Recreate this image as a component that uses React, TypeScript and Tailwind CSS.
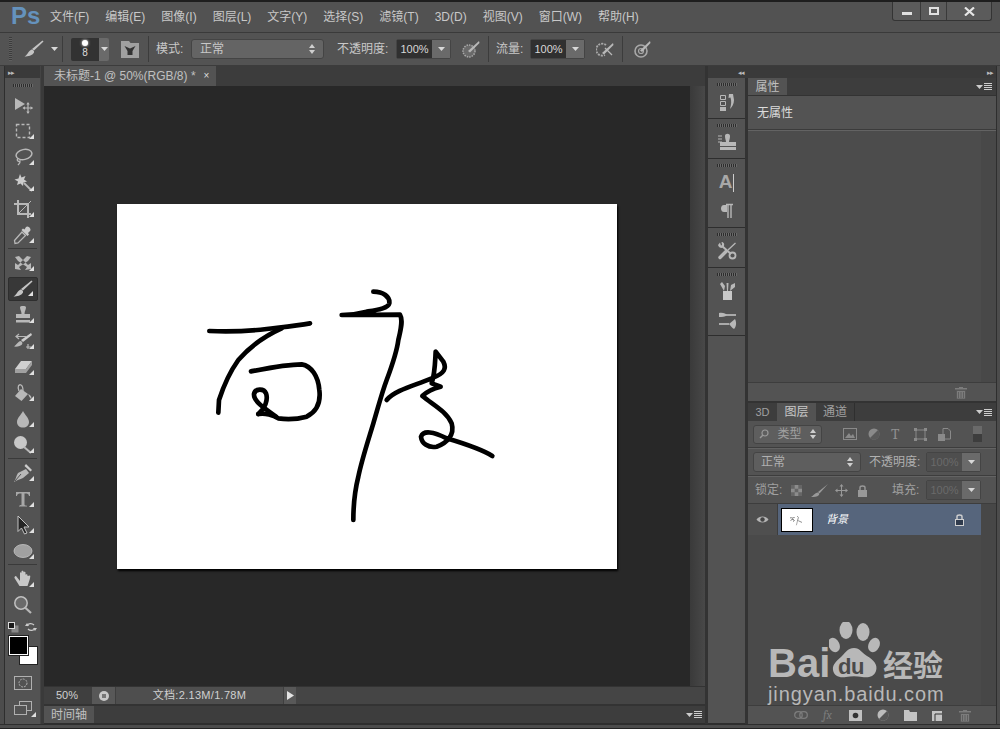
import React from 'react';

const ICON = '#b8b8b8';

// small white triangle in the corner of tools with a flyout
const Flyout = () => (
  <svg width="5" height="5" viewBox="0 0 5 5" className="absolute right-[4px] bottom-[4px]">
    <path d="M5 0V5H0Z" fill="#e0e0e0" />
  </svg>
);

const Caret = ({ color = '#d8d8d8' }: { color?: string }) => (
  <svg width="7" height="4" viewBox="0 0 7 4"><path d="M0 0H7L3.5 4Z" fill={color} /></svg>
);

const UpDown = () => (
  <svg width="6" height="10" viewBox="0 0 6 10"><path d="M3 0L6 4H0ZM0 6H6L3 10Z" fill="#cfcfcf" /></svg>
);

const Grip = ({ w = 20 }: { w?: number }) => (
  <div className="h-[3px] mx-auto" style={{ width: w, backgroundImage: 'repeating-linear-gradient(90deg,#2c2c2c 0 1px,#6a6a6a 1px 2px)' }} />
);

const Svg = ({ children, s = 20 }: { children: React.ReactNode; s?: number }) => (
  <svg width={s} height={s} viewBox="0 0 20 20">{children}</svg>
);

const BrushIcon = () => (
  <Svg>
    <path d="M18.5 1.5L19.5 2.5L10 11.5L8 10Z" fill="#c4c4c4" />
    <path d="M7.5 10.5C9 10.5 10.5 12 10 13.5C8.5 16.5 4 17.5 0.5 17.5C3 16.5 4.5 12 7.5 10.5Z" fill="#c4c4c4" />
  </Svg>
);

const tools1: React.ReactNode[] = [
  <Svg key="move">
    <path d="M2 3L12 9L2 15Z" fill={ICON} />
    <path d="M15 8V18M10.5 13H19.5" stroke={ICON} strokeWidth="1.2" />
    <path d="M15 7L16.7 9.5H13.3ZM15 19L16.7 16.5H13.3ZM9.5 13L12 11.3V14.7ZM20 13L17.5 11.3V14.7Z" fill={ICON} />
  </Svg>,
  <Svg key="marquee">
    <rect x="3.5" y="3.5" width="13" height="13" fill="none" stroke={ICON} strokeWidth="1.4" strokeDasharray="3 2" />
  </Svg>,
  <Svg key="lasso">
    <ellipse cx="11" cy="7.5" rx="8" ry="5" fill="none" stroke={ICON} strokeWidth="1.5" transform="rotate(-12 11 7.5)" />
    <path d="M5 11C3 14 6 15 7 14C7.5 16 6 17 5 18" fill="none" stroke={ICON} strokeWidth="1.3" />
  </Svg>,
  <Svg key="wand">
    <path d="M7 1L8.5 4.5L12.5 3L11 6.5L14 8.5L10.5 9.5L10 13L7.5 10.5L4 12L5 8.5L1.5 6.5L5.5 5.5Z" fill="#cccccc" />
    <path d="M11 10L19 18" stroke={ICON} strokeWidth="1.8" />
  </Svg>,
  <Svg key="crop">
    <path d="M5 1V15H18M1 5H15V19" fill="none" stroke={ICON} strokeWidth="2" />
    <path d="M5 15L18 2" stroke={ICON} strokeWidth="1" />
  </Svg>,
  <Svg key="dropper">
    <path d="M13 2C15 0 19 4 17 6L15 8L16 9.5L14.5 11L8.5 5L10 3.5L11.5 4.5Z" fill="#cacaca" />
    <path d="M9 7L12.5 10.5L5 18L2 18.5L1.5 15.5Z" fill="none" stroke={ICON} strokeWidth="1.3" />
  </Svg>,
];

const tools2: React.ReactNode[] = [
  <Svg key="heal">
    <path d="M2 4L6 3L15 12L18 10L18 16L12 17L14 14L5 8ZM18 4L14 3L5 12L2 10L2 16L8 17L6 14L15 8Z" fill={ICON} />
  </Svg>,
  <BrushIcon key="brush" />,
  <Svg key="stamp">
    <path d="M7 2C7 0.5 13 0.5 13 2C13 5 11.5 6 11.5 9H17V13H3V9H8.5C8.5 6 7 5 7 2Z" fill={ICON} />
    <rect x="3" y="15" width="14" height="2.5" fill={ICON} />
  </Svg>,
  <Svg key="history">
    <path d="M18 2L8 9L10 11L19 4Z" fill="#cccccc" />
    <path d="M7 10C9 10 10 12 9 13.5C8 15 4 16 1 15.5C3 14.5 4.5 11 7 10Z" fill={ICON} />
    <path d="M6 3L3 5.5L6 8M3 5.5H13M15 13V18M13 16H18" fill="none" stroke={ICON} strokeWidth="1.2" />
  </Svg>,
  <Svg key="eraser">
    <path d="M8 4H19L13 12H2Z" fill="#d0d0d0" />
    <path d="M2 12H13V16H2ZM13 12L19 4V8L13 16Z" fill="#a0a0a0" />
  </Svg>,
  <Svg key="bucket">
    <path d="M8 6L15 11L8.5 18L2 13Z" fill={ICON} />
    <path d="M6 8C4 3 6 1 8 2C10 3 10 6 10 8" fill="none" stroke={ICON} strokeWidth="1.3" />
    <path d="M15 11C18 12 19 14 18 16C17 15 16 13 15 11Z" fill={ICON} />
  </Svg>,
  <Svg key="blur">
    <path d="M10 2C12 6 16 9 16 13C16 16.5 13.5 18.5 10 18.5C6.5 18.5 4 16.5 4 13C4 9 8 6 10 2Z" fill={ICON} />
  </Svg>,
  <Svg key="dodge">
    <circle cx="7.5" cy="7.5" r="6.5" fill="#c8c8c8" />
    <path d="M11 12L18 18" stroke={ICON} strokeWidth="2" />
  </Svg>,
];

const tools3: React.ReactNode[] = [
  <Svg key="pen">
    <path d="M13 6L16 10L10 15C7 16.5 4 17 1 19C3 16 3 13 5 10Z" fill={ICON} />
    <path d="M13 1L19 7L17.5 8.5L11.5 3Z" fill="#cccccc" />
    <path d="M2 18L8 11" stroke="#535353" strokeWidth="1" />
  </Svg>,
  <Svg key="type">
    <path d="M3 3H17V7H16C15.5 5 15 4.500 11.500 4.500V15.500C11.500 16.500 12.500 16.500 14 16.700V17.500H6V16.700C7.500 16.500 8.500 16.500 8.500 15.500V4.500C5 4.500 4.500 5 4 7H3Z" fill="#a8a8a8" />
  </Svg>,
  <Svg key="path">
    <path d="M5 1L16 12H11L14 18L11.5 19L8.500 13L5 16.5Z" fill="#252525" stroke="#c4c4c4" strokeWidth="1" />
  </Svg>,
  <Svg key="shape">
    <ellipse cx="10" cy="10" rx="9" ry="6.5" fill="#a0a0a0" stroke="#c4c4c4" strokeWidth="0.8" />
  </Svg>,
];

const tools4: React.ReactNode[] = [
  <Svg key="hand">
    <path d="M3 7L7 12V4C7 3 8.500 3 8.500 4V10V2.500C8.500 1.500 10.500 1.500 10.500 2.500V10V3.500C10.500 2.500 12.500 2.500 12.500 3.500V10.500V6C12.500 5 14.500 5 14.500 6V7L17 6.500C18 7 16 13 14.500 17H6.500L1.500 9C1 8 2.500 6.500 3 7Z" fill="#c8c8c8" />
  </Svg>,
  <Svg key="zoom">
    <circle cx="8" cy="8" r="6.200" fill="#6a6a6a" stroke="#c0c0c0" strokeWidth="1.500" />
    <path d="M12 12.500L18 18" stroke={ICON} strokeWidth="2.200" />
  </Svg>,
];

const Tool = ({ icon, flyout = true, active = false }: { icon: React.ReactNode; flyout?: boolean; active?: boolean }) => (
  <div className="h-[26px] flex items-center justify-center">
    <div className={`relative w-[30px] h-[24px] flex items-center justify-center rounded-[2px] ${active ? 'bg-[#383838] border border-[#2e2e2e]' : ''}`}>
      {icon}
      {flyout && <Flyout />}
    </div>
  </div>
);

const ToolSep = () => <div className="h-[2px] mx-[3px] border-t border-[#3a3a3a] border-b-[#666]" />;

const ToolBar = () => (
  <div className="w-[44px] flex shrink-0">
    <div className="w-[5px] border-r border-[#2e2e2e] bg-[#4c4c4c]" />
    <div className="w-[36px] flex flex-col bg-[#535353] border-r border-[#444]">
      <div className="h-[12px] bg-[#3a3a3a] flex items-center pl-[3px] text-[#bbb] text-[7px] leading-none tracking-[-1px]">▸▸</div>
      <div className="h-[14px] flex items-center"><Grip /></div>
      {tools1.map((t, i) => <Tool key={i} icon={t} flyout={i !== 0} />)}
      <ToolSep />
      {tools2.map((t, i) => <Tool key={i} icon={t} active={i === 1} />)}
      <ToolSep />
      {tools3.map((t, i) => <Tool key={i} icon={t} />)}
      <ToolSep />
      {tools4.map((t, i) => <Tool key={i} icon={t} flyout={i === 0} />)}
      {/* default + swap colours */}
      <div className="h-[16px] flex items-center justify-between px-[3px] mt-[1px]">
        <svg width="11" height="11" viewBox="0 0 11 11"><rect x="3.500" y="3.500" width="7" height="7" fill="#888" /><rect x="0.500" y="0.500" width="6" height="6" fill="#1a1a1a" stroke="#ddd" /></svg>
        <svg width="12" height="12" viewBox="0 0 12 12"><path d="M2 5C3 2 7 2 9 4M10 7C9 10 5 10 3 8" fill="none" stroke="#ccc" strokeWidth="1.200" /><path d="M0 5H4L2 2ZM12 7H8L10 10Z" fill="#ccc" /></svg>
      </div>
      <div className="relative h-[34px]">
        <div className="absolute left-[14px] top-[11px] w-[19px] h-[19px] bg-white border border-[#222]" />
        <div className="absolute left-[4px] top-[1px] w-[19px] h-[19px] bg-black border border-white outline outline-1 outline-[#222]" />
      </div>
      <div className="h-[24px] flex items-center justify-center mt-[2px]">
        <svg width="18" height="14" viewBox="0 0 18 14"><rect x="0.500" y="0.500" width="17" height="13" fill="none" stroke="#b0b0b0" /><circle cx="9" cy="7" r="4" fill="none" stroke="#b0b0b0" strokeDasharray="2 1" /></svg>
      </div>
      <div className="relative h-[26px] flex items-center justify-center">
        <svg width="18" height="15" viewBox="0 0 18 15"><rect x="5.500" y="0.500" width="12" height="9" fill="none" stroke="#b0b0b0" /><rect x="0.500" y="4.500" width="12" height="9" fill="#535353" stroke="#b0b0b0" /></svg>
        <Flyout />
      </div>
    </div>
    <div className="w-[3px] bg-[#3a3a3a]" />
  </div>
);

const menus = ['文件(F)', '编辑(E)', '图像(I)', '图层(L)', '文字(Y)', '选择(S)', '滤镜(T)', '3D(D)', '视图(V)', '窗口(W)', '帮助(H)'];

const TitleBar = () => (
  <div className="h-[32px] shrink-0 flex items-start relative bg-[#525252] border-t-2 border-[#1e1e1e]">
    <div className="w-[50px] pl-[11px] pt-[1px] text-[24px] leading-[26px] font-bold text-[#6592bd]">Ps</div>
    <div className="flex gap-[16px] pt-[7px] text-[12px] leading-[16px] text-[#c8c8c8]">
      {menus.map(m => <span key={m}>{m}</span>)}
    </div>
    <div className="ml-auto mr-[8px] flex h-[19px] w-[100px] bg-[#5b5b5b] border border-t-0 border-[#343434] rounded-b-[3px]">
      <div className="w-[28px] flex items-center justify-center border-r border-[#3a3a3a]"><div className="w-[10px] h-[3px] mt-[5px] bg-[#e0e0e0]" /></div>
      <div className="w-[26px] flex items-center justify-center border-r border-[#3a3a3a]"><div className="w-[10px] h-[8px] border-2 border-[#e0e0e0]" /></div>
      <div className="flex-1 flex items-center justify-center">
        <svg width="11" height="9" viewBox="0 0 11 9"><path d="M1 0.500L10 8.500M10 0.500L1 8.500" stroke="#e6e6e6" strokeWidth="2.200" /></svg>
      </div>
    </div>
  </div>
);

const ComboInput = ({ dim = false }: { dim?: boolean }) => (
  <div className={`flex w-[55px] h-[20px] rounded-[2px] border border-[#444] ${dim ? 'text-[#6a6a6a]' : 'text-[#d8d8d8]'}`}>
    <div className={`w-[35px] flex items-center justify-center text-[11px] ${dim ? 'bg-[#4e4e4e]' : 'bg-[#303030]'}`}>100%</div>
    <div className="flex-1 flex items-center justify-center bg-[#6a6a6a]"><Caret /></div>
  </div>
);

const OptSep = () => <div className="w-[1px] h-[26px] bg-[#3c3c3c]" />;

const Airbrush = () => (
  <svg width="18" height="18" viewBox="0 0 18 18">
    <circle cx="7" cy="11" r="6" fill="#6a6a6a" stroke="#a8a8a8" strokeWidth="1.500" strokeDasharray="1.500 1" />
    <path d="M17 1L6 11L8 12.500L17.500 3Z" fill="#b8b8b8" />
  </svg>
);

const OptionsBar = () => (
  <div className="h-[34px] shrink-0 flex items-center bg-[#535353] border-t border-[#3a3a3a] border-b border-b-[#3c3c3c] pl-[9px] text-[12px] text-[#c8c8c8]">
    <div className="w-[3px] h-[24px] mr-[12px]" style={{ backgroundImage: 'repeating-linear-gradient(180deg,#3c3c3c 0 1px,#5f5f5f 1px 2px)' }} />
    <BrushIcon />
    <div className="ml-[7px] mr-[4px]"><Caret /></div>
    <OptSep />
    <div className="ml-[8px] w-[38px] h-[23px] flex rounded-[2px] overflow-hidden">
      <div className="w-[28px] bg-[#323232] flex flex-col items-center pt-[2px]">
        <div className="w-[6px] h-[6px] rounded-full bg-white shadow-[0_0_3px_#fff]" />
        <span className="text-[10px] leading-[12px] mt-[1px] text-[#ddd]">8</span>
      </div>
      <div className="flex-1 bg-[#6a6a6a] flex items-center justify-center"><Caret /></div>
    </div>
    <div className="ml-[12px]">
      <svg width="18" height="17" viewBox="0 0 18 17"><path d="M0 0H8L9.500 2H18V17H0Z" fill="#a0a0a0" /><path d="M3.500 5L9 7.500L14.500 5L11.500 10V14H6.500V10Z" fill="#333" /></svg>
    </div>
    <div className="ml-[9px]"><OptSep /></div>
    <span className="ml-[7px] w-[35px]">模式:</span>
    <div className="w-[133px] h-[20px] flex items-center justify-between px-[8px] bg-[#646464] border border-[#444] rounded-[3px]">
      <span>正常</span><UpDown />
    </div>
    <span className="ml-[13px] w-[59px]">不透明度:</span>
    <ComboInput />
    <div className="ml-[11px]"><Airbrush /></div>
    <div className="ml-[8px]"><OptSep /></div>
    <span className="ml-[7px] w-[34px]">流量:</span>
    <ComboInput />
    <div className="ml-[11px]">
      <svg width="18" height="18" viewBox="0 0 18 18">
        <path d="M10 5A6 6 0 1 0 9 15" fill="none" stroke="#a8a8a8" strokeWidth="1.800" strokeDasharray="2 1" />
        <path d="M17 3L6 13L8 14.500L17.500 5Z" fill="#b8b8b8" />
        <path d="M9 8L16 15" stroke="#b8b8b8" strokeWidth="1.200" />
      </svg>
    </div>
    <div className="ml-[8px]"><OptSep /></div>
    <div className="ml-[10px]">
      <svg width="18" height="18" viewBox="0 0 18 18">
        <circle cx="8" cy="11" r="6" fill="none" stroke="#a8a8a8" strokeWidth="1.600" />
        <circle cx="8" cy="11" r="2.500" fill="none" stroke="#a8a8a8" strokeWidth="1.200" />
        <path d="M17 1L7 10.500L9 12L17.500 3Z" fill="#b8b8b8" />
      </svg>
    </div>
  </div>
);

const Drawing = () => (
  <svg viewBox="-219 -228 1500 1095" className="w-full h-full" fill="none" stroke="#000" strokeWidth="14" strokeLinecap="round" strokeLinejoin="round">
    <path d="M58 153C110 155 180 153 230 147C280 141 320 137 360 130" />
    <path d="M275 145C230 165 180 200 145 240C120 275 100 320 87 360L85 398" />
    <path d="M183 274C230 265 290 253 335 253C365 258 385 290 388 330C393 370 380 395 350 410C320 418 285 418 265 415C250 405 225 398 205 402" />
    <path d="M205 402C225 385 235 360 228 340C222 325 195 325 192 342C190 365 225 385 258 410" />
    <path d="M550 35C580 35 600 50 598 70C595 85 560 90 530 95C500 103 480 105 455 105L630 104C640 120 632 150 625 180C620 220 605 260 590 300C575 340 565 380 550 430C535 480 515 540 505 590C495 630 490 660 490 720" />
    <path d="M590 360C610 335 660 320 700 305L725 295C765 280 770 265 760 245L737 215C735 250 735 280 725 310L752 320C730 325 710 335 697 348C730 375 770 395 785 430C795 465 770 490 740 500C715 505 695 490 693 470C700 450 730 455 770 475C820 490 870 505 907 528" />
  </svg>
);

const Document = () => (
  <div className="flex-1 flex flex-col min-w-0">
    {/* tab bar */}
    <div className="h-[20px] shrink-0 bg-[#3c3c3c] flex">
      <div className="w-[172px] bg-[#535353] flex items-center pl-[10px] text-[12px] text-[#c0c0c0] whitespace-nowrap">
        <span>未标题-1 @ 50%(RGB/8) *</span>
        <span className="ml-[8px] text-[10px] leading-none text-[#ddd]">×</span>
      </div>
    </div>
    {/* canvas + scroll strip */}
    <div className="flex-1 flex min-h-0">
      <div className="flex-1 bg-[#282828] flex items-center justify-center">
        <div className="w-[500px] h-[365px] bg-white shadow-[1px_2px_2px_#000]">
          <Drawing />
        </div>
      </div>
      <div className="w-[15px] bg-gradient-to-r from-[#3a3a3a] to-[#484848]" />
    </div>
    {/* status bar */}
    <div className="h-[18px] shrink-0 bg-[#3f3f3f] border-t border-[#333] flex items-center text-[11px] text-[#d0d0d0]">
      <span className="w-[48px] pl-[12px]">50%</span>
      <div className="w-[23px] h-full bg-[#585858] flex items-center justify-center">
        <div className="w-[10px] h-[10px] rounded-full bg-[#c8c8c8] flex items-center justify-center">
          <div className="w-[4px] h-[4px] bg-[#777]" />
        </div>
      </div>
      <div className="w-[168px] h-full bg-[#4e4e4e] text-center leading-[17px] tracking-[0.3px] border-l border-[#3f3f3f]">文档:2.13M/1.78M</div>
      <div className="w-[12px] h-full ml-[1px] bg-[#585858] flex items-center justify-center">
        <svg width="7" height="9" viewBox="0 0 7 9"><path d="M0 0L7 4.500L0 9Z" fill="#e4e4e4" /></svg>
      </div>
      <div className="flex-1 h-full bg-[#454545]" />
    </div>
    {/* timeline */}
    <div className="h-[2px] shrink-0 bg-[#333]" />
    <div className="h-[18px] shrink-0 bg-[#3d3d3d] flex items-stretch border-b border-[#2e2e2e]">
      <div className="w-[50px] bg-[#535353] flex items-center justify-center text-[12px] text-[#c0c0c0]">时间轴</div>
      <div className="ml-auto pr-[3px] flex items-center gap-[1px]"><Caret color="#ccc" /><MenuLines /></div>
    </div>
  </div>
);

const MenuLines = () => (
  <div className="w-[8px] h-[7px]" style={{ backgroundImage: 'repeating-linear-gradient(180deg,#ccc 0 1px,transparent 1px 2px)' }} />
);

const DockGroup = ({ h, children }: { h: number; children: React.ReactNode }) => (
  <div className="shrink-0 bg-[#535353] border-b border-[#2e2e2e] flex flex-col items-center pt-[5px]" style={{ height: h }}>
    <Grip />
    <div className="flex-1 flex flex-col items-center justify-around w-full pb-[1px]">{children}</div>
  </div>
);

const Dock = () => (
  <div className="w-[37px] shrink-0 flex flex-col bg-[#535353]">
    <DockGroup h={41}>
      <Svg>
        <path d="M3.500 3.500H8.500V7.500H3.500ZM3.500 9.500H8.500V13.500H3.500Z" fill="none" stroke={ICON} />
        <rect x="3" y="15" width="6" height="4" fill={ICON} />
        <path d="M12 2H16L17 8C17 12 15 15 13 17C14.500 12 14.500 9 13.500 5.500L11.500 6Z" fill={ICON} />
      </Svg>
    </DockGroup>
    <DockGroup h={40}>
      <Svg>
        <path d="M1 4H5M1 7H5M1 10H5" stroke={ICON} strokeWidth="1.200" />
        <path d="M8 4C8 1 13 1 13 4C13 7 12 8 12 10H19V14H3V10H9C9 8 8 7 8 4Z" fill={ICON} />
        <rect x="3" y="15" width="16" height="3" fill={ICON} />
      </Svg>
    </DockGroup>
    <DockGroup h={69}>
      <div className="flex items-end h-[20px] text-[19px] leading-[20px] font-bold text-[#a8a8a8]">A<div className="w-[1px] h-[18px] bg-[#ccc] ml-[1px]" /></div>
      <Svg>
        <path d="M10 4H7C3 4 3 11 7 11H10Z" fill={ICON} />
        <path d="M11 4V17M14 3V17M9 3.500H16" stroke={ICON} strokeWidth="1.400" />
      </Svg>
    </DockGroup>
    <DockGroup h={40}>
      <Svg>
        {/* wrench */}
        <path d="M5 5L14 13" stroke={ICON} strokeWidth="2" />
        <path d="M1 4L3 1.500L4 4.500L5 4L4.500 1C7 1 8 3.500 6.500 6L4.500 7C3 7 1.500 6 1 4Z" fill={ICON} />
        <circle cx="15.500" cy="14.500" r="3" fill="none" stroke={ICON} strokeWidth="1.800" />
        {/* screwdriver */}
        <path d="M18.500 2L11 9" stroke={ICON} strokeWidth="1.300" />
        <path d="M9 10.500L3 16.500" stroke={ICON} strokeWidth="3.400" strokeLinecap="round" />
      </Svg>
    </DockGroup>
    <DockGroup h={68}>
      <Svg>
        <rect x="6" y="10" width="9" height="9" fill="#c8c8c8" />
        <path d="M7 10L3 3L5 1L8 5ZM10 10L9.500 2L11.500 2L11 10ZM13 10L14 4L18 2L18 6Z" fill={ICON} />
      </Svg>
      <Svg>
        <path d="M2 5H19M2 14H12" stroke="#c8c8c8" strokeWidth="1.400" />
        <path d="M2 3C6 2 9 4 10 5C8 7 5 7 2 7Z" fill={ICON} />
        <path d="M18 9C20 13 19 17 17 19C15 18 13 15 12 14Z" fill={ICON} />
      </Svg>
    </DockGroup>
    <div className="flex-1 border-b border-[#2e2e2e]" />
  </div>
);

const PanelMenu = () => (
  <div className="ml-auto pr-[4px] flex items-center gap-[1px]"><Caret color="#ccc" /><MenuLines /></div>
);

const PanelRule = () => <div className="h-[2px] shrink-0 bg-[#3b3b3b] border-b border-[#636363]" />;

const Trash = ({ color = '#7c7c7c' }: { color?: string }) => (
  <svg width="12" height="13" viewBox="0 0 12 13">
    <path d="M4 1H8V2H12V3.500H0V2H4Z" fill={color} />
    <path d="M1.500 4.500H10.500V13H1.500ZM3.500 6V12M6 6V12M8.500 6V12" fill={color} stroke="#535353" strokeWidth="0.700" />
  </svg>
);

const PropertiesPanel = () => (
  <div className="h-[325px] shrink-0 flex flex-col border-b-2 border-[#333]">
    <div className="h-[18px] shrink-0 bg-[#3d3d3d] flex border-b border-[#333]">
      <div className="w-[39px] bg-[#535353] flex items-center justify-center text-[12px] text-[#c0c0c0]">属性</div>
      <PanelMenu />
    </div>
    <div className="h-[33px] shrink-0 bg-[#535353] flex items-center pl-[9px] text-[12px] text-[#dcdcdc]">无属性</div>
    <PanelRule />
    <div className="flex-1 flex bg-[#4c4c4c]">
      <div className="flex-1" />
      <div className="w-[15px] bg-[#484848]" />
    </div>
    <div className="h-[19px] shrink-0 bg-[#535353] border-t border-[#3d3d3d] flex items-center justify-end pr-[29px]"><Trash /></div>
  </div>
);

const LayersPanel = () => (
  <div className="flex-1 flex flex-col min-h-0 text-[12px]">
    <div className="h-[18px] shrink-0 bg-[#3d3d3d] flex items-stretch text-[#a0a0a0]">
      <div className="w-[29px] flex items-center justify-center text-[11px]">3D</div>
      <div className="w-[39px] bg-[#535353] flex items-center justify-center text-[#c8c8c8]">图层</div>
      <div className="w-[39px] flex items-center justify-center border-r border-[#2f2f2f]">通道</div>
      <PanelMenu />
    </div>
    {/* filter row */}
    <div className="h-[27px] shrink-0 bg-[#535353] flex items-center pl-[5px] border-b border-[#3d3d3d]">
      <div className="w-[69px] h-[19px] flex items-center justify-between px-[5px] bg-[#5e5e5e] border border-[#444] rounded-[3px] text-[#a0a0a0]">
        <svg width="10" height="10" viewBox="0 0 10 10"><circle cx="6" cy="4" r="3" fill="none" stroke="#999" strokeWidth="1.200" /><path d="M4 6L1 9" stroke="#999" strokeWidth="1.400" /></svg>
        <span>类型</span>
        <UpDown />
      </div>
      <div className="ml-[21px] flex items-center gap-[11px] text-[#888]">
        <svg width="14" height="12" viewBox="0 0 14 12"><rect x="0.500" y="0.500" width="13" height="11" fill="none" stroke="#8a8a8a" /><path d="M2 10L6 5L8 8L10 6L12 10Z" fill="#8a8a8a" /></svg>
        <svg width="12" height="12" viewBox="0 0 12 12"><circle cx="6" cy="6" r="5.500" fill="#8a8a8a" /><path d="M10 2L2 10A5.500 5.500 0 0 0 10 2Z" fill="#5a5a5a" /></svg>
        <span className="w-[12px] text-[15px] leading-none font-serif text-[#8f8f8f]">T</span>
        <svg width="13" height="13" viewBox="0 0 13 13"><rect x="2" y="2" width="9" height="9" fill="none" stroke="#8a8a8a" /><path d="M0 0H3V3H0ZM10 0H13V3H10ZM0 10H3V13H0ZM10 10H13V13H10Z" fill="#8a8a8a" /></svg>
        <svg width="13" height="13" viewBox="0 0 13 13"><path d="M5 0.500H10L12.500 3V11H5Z" fill="none" stroke="#8a8a8a" /><rect x="0" y="6" width="7" height="7" fill="#8a8a8a" /></svg>
      </div>
      <div className="ml-[22px] w-[9px] h-[16px] flex flex-col">
        <div className="h-[8px] bg-[#6a6a6a]" />
        <div className="h-[8px] bg-[#3d3d3d]" />
      </div>
    </div>
    {/* blend row */}
    <div className="h-[28px] shrink-0 bg-[#535353] flex items-center pl-[5px] border-t border-[#636363] border-b border-b-[#3d3d3d] text-[#b0b0b0]">
      <div className="w-[108px] h-[20px] flex items-center justify-between px-[7px] bg-[#5e5e5e] border border-[#444] rounded-[3px]">
        <span>正常</span><UpDown />
      </div>
      <span className="ml-[8px] w-[57px] whitespace-nowrap">不透明度:</span>
      <ComboInput dim />
    </div>
    {/* lock row */}
    <div className="h-[28px] shrink-0 bg-[#535353] flex items-center pl-[7px] border-t border-[#636363] border-b border-b-[#3d3d3d] text-[#a0a0a0]">
      <span className="w-[36px]">锁定:</span>
      <svg width="11" height="11" viewBox="0 0 11 11"><rect width="11" height="11" fill="#8c8c8c" /><path d="M0 0H3.700V3.700H0ZM7.300 0H11V3.700H7.300ZM3.700 3.700H7.300V7.300H3.700ZM0 7.300H3.700V11H0ZM7.300 7.300H11V11H7.300Z" fill="#666" /></svg>
      <div className="ml-[9px]">
        <svg width="17" height="13" viewBox="0 0 17 13"><path d="M17 0L7 8L8.500 9.500Z" fill="#999" /><path d="M6.500 8.500C8 8.500 8.500 10 8 11C6 13 3 13 0 13C2 12 4 9 6.500 8.500Z" fill="#999" /></svg>
      </div>
      <div className="ml-[7px]">
        <svg width="13" height="13" viewBox="0 0 13 13"><path d="M6.500 1V12M1 6.500H12" stroke="#999" /><path d="M6.500 0L8.500 2.500H4.500ZM6.500 13L8.500 10.500H4.500ZM0 6.500L2.500 4.500V8.500ZM13 6.500L10.500 4.500V8.500Z" fill="#999" /></svg>
      </div>
      <div className="ml-[9px]">
        <svg width="11" height="13" viewBox="0 0 11 13"><path d="M3 6V3.500C3 1.500 8 1.500 8 3.500V6" fill="none" stroke="#999" strokeWidth="1.400" /><rect x="1" y="6" width="9" height="7" fill="#999" /></svg>
      </div>
      <span className="ml-[24px] w-[34px] whitespace-nowrap">填充:</span>
      <ComboInput dim />
    </div>
    {/* layer rows */}
    <div className="flex-1 flex min-h-0 bg-[#4a4a4a]">
      <div className="flex-1 flex flex-col">
        <div className="h-[31px] flex">
          <div className="w-[30px] bg-[#4f4f4f] border-r border-[#3d3d3d] flex items-center justify-center">
            <svg width="13" height="9" viewBox="0 0 13 9"><path d="M0.500 4.500C3 0.500 10 0.500 12.500 4.500C10 8.500 3 8.500 0.500 4.500Z" fill="#b4b4b4" /><circle cx="6.500" cy="4.500" r="2.200" fill="#444" /></svg>
          </div>
          <div className="flex-1 bg-[#56657c] flex items-center">
            <div className="ml-[3px] w-[32px] h-[24px] bg-white border border-black flex items-center justify-center">
              <svg width="22" height="14" viewBox="-219 -228 1500 1095" preserveAspectRatio="none"><path d="M58 153L360 130M87 398L275 145M183 274C330 240 430 400 265 415M550 35L630 104L490 720M590 360L907 528" stroke="#000" strokeWidth="50" fill="none" strokeDasharray="50 40" /></svg>
            </div>
            <span className="ml-[13px] text-[11px] italic text-white">背景</span>
            <div className="ml-auto mr-[16px]">
              <svg width="11" height="13" viewBox="0 0 11 13"><path d="M3 6V3.500C3 1.500 8 1.500 8 3.500V6" fill="none" stroke="#d0d0d0" strokeWidth="1.400" /><rect x="1.500" y="6.500" width="8" height="6" fill="#2f3a4c" stroke="#d0d0d0" /></svg>
            </div>
          </div>
        </div>
      </div>
      <div className="w-[15px] bg-[#474747]" />
    </div>
    {/* footer */}
    <div className="h-[19px] shrink-0 bg-[#535353] border-t border-[#3d3d3d] flex items-center pl-[46px] gap-[15px] text-[#7c7c7c]">
      <svg width="14" height="8" viewBox="0 0 14 8"><rect x="0.700" y="0.700" width="7.500" height="6.600" rx="3.300" fill="none" stroke="#7c7c7c" strokeWidth="1.300" /><rect x="5.800" y="0.700" width="7.500" height="6.600" rx="3.300" fill="none" stroke="#7c7c7c" strokeWidth="1.300" /></svg>
      <span className="w-[11px] text-[12px] italic leading-none font-serif">fx</span>
      <svg width="13" height="11" viewBox="0 0 13 11"><rect width="13" height="11" fill="#c0c0c0" /><circle cx="6.500" cy="5.500" r="2.800" fill="#333" /></svg>
      <svg width="12" height="12" viewBox="0 0 12 12"><circle cx="6" cy="6" r="5.500" fill="#bbb" /><path d="M10 2L2 10A5.500 5.500 0 0 0 10 2Z" fill="#555" /></svg>
      <svg width="13" height="11" viewBox="0 0 13 11"><path d="M0 0H5L6 2H13V11H0Z" fill="#c4c4c4" /></svg>
      <svg width="12" height="12" viewBox="0 0 12 12"><path d="M0 2H10V12H0Z" fill="#c4c4c4" /><path d="M3 12V5H10" fill="none" stroke="#333" /></svg>
      <Trash />
    </div>
  </div>
);

const Watermark = () => (
  <div className="absolute left-[768px] top-[622px] w-[180px] h-[84px] text-[#b8b8b8] pointer-events-none" style={{ fontFamily: '"Liberation Sans", sans-serif' }}>
    <span className="absolute left-0 top-[18px] text-[40px] leading-[46px] font-bold">Bai</span>
    <svg width="52" height="58" viewBox="0 0 52 58" className="absolute left-[61px] top-[0px]">
      <ellipse cx="17" cy="8" rx="6.500" ry="9" fill="#b8b8b8" />
      <ellipse cx="34" cy="10" rx="6.500" ry="9" fill="#b8b8b8" />
      <ellipse cx="5" cy="23" rx="5.500" ry="7.500" fill="#b8b8b8" transform="rotate(-25 5 23)" />
      <ellipse cx="45" cy="23" rx="5.500" ry="7.500" fill="#b8b8b8" transform="rotate(25 45 23)" />
      <path d="M25 26C31 26 33 31 38 34C45 38 49 43 47 49C45 55 39 56 33 55C28 54 22 54 17 55C10 56 5 54 4 48C3 42 9 38 13 34C17 30 19 26 25 26Z" fill="#b8b8b8" />
    </svg>
    <span className="absolute left-[70px] top-[34px] text-[22px] leading-[22px] font-bold text-[#4a4a4a] tracking-[-0.5px]">du</span>
    <span className="absolute left-[115px] top-[24px] text-[30px] leading-[34px] font-bold whitespace-nowrap" style={{ fontFamily: '"Noto Sans CJK SC", sans-serif' }}>经验</span>
    <span className="absolute left-0 top-[61px] text-[20px] leading-[23px] tracking-[0.9px] whitespace-nowrap">jingyan.baidu.com</span>
  </div>
);

const App: React.FC = () => {
  return (
    <div className="relative w-[1000px] h-[729px] overflow-hidden flex flex-col bg-[#4c4c4c]" style={{ fontFamily: '"Liberation Sans", "Noto Sans CJK SC", sans-serif' }}>
      <TitleBar />
      <OptionsBar />
      <div className="flex-1 flex min-h-0">
        <ToolBar />
        <Document />
        <div className="w-[3px] shrink-0 bg-[#333]" />
        {/* right dock */}
        <div className="w-[288px] shrink-0 flex flex-col">
          <div className="h-[12px] shrink-0 bg-[#3a3a3a] flex items-center justify-between px-[30px] pr-[3px] text-[#bbb] text-[7px] leading-none tracking-[-1px]">
            <span>◂◂</span><span>▸▸</span>
          </div>
          <div className="flex-1 flex min-h-0">
            <Dock />
            <div className="w-[3px] shrink-0 bg-[#333]" />
            <div className="flex-1 flex flex-col min-w-0">
              <PropertiesPanel />
              <LayersPanel />
            </div>
          </div>
        </div>
        <div className="w-[4px] shrink-0 bg-[#4c4c4c] border-l border-[#2e2e2e]" />
      </div>
      <div className="h-[5px] shrink-0 bg-[#4c4c4c] border-t border-[#2e2e2e] border-b border-b-[#222]" />
      <Watermark />
    </div>
  );
};

export default App;
